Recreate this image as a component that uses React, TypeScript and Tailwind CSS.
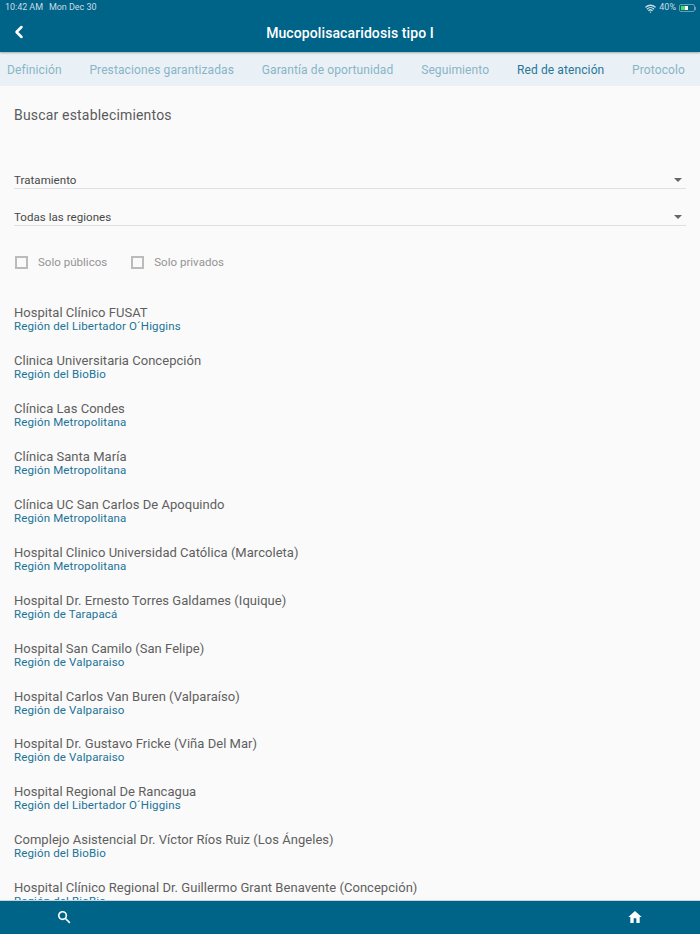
import React from 'react';
import { ChevronLeft, Wifi } from 'lucide-react';

interface Establishment {
  name: string;
  region: string;
}

const tabs = [
  { label: 'Definición', active: false },
  { label: 'Prestaciones garantizadas', active: false },
  { label: 'Garantía de oportunidad', active: false },
  { label: 'Seguimiento', active: false },
  { label: 'Red de atención', active: true },
  { label: 'Protocolo', active: false },
];

const establishments: Establishment[] = [
  { name: 'Hospital Clínico FUSAT', region: 'Región del Libertador O´Higgins' },
  { name: 'Clinica Universitaria Concepción', region: 'Región del BioBio' },
  { name: 'Clínica Las Condes', region: 'Región Metropolitana' },
  { name: 'Clínica Santa María', region: 'Región Metropolitana' },
  { name: 'Clínica UC San Carlos De Apoquindo', region: 'Región Metropolitana' },
  { name: 'Hospital Clinico Universidad Católica (Marcoleta)', region: 'Región Metropolitana' },
  { name: 'Hospital Dr. Ernesto Torres Galdames (Iquique)', region: 'Región de Tarapacá' },
  { name: 'Hospital San Camilo (San Felipe)', region: 'Región de Valparaiso' },
  { name: 'Hospital Carlos Van Buren (Valparaíso)', region: 'Región de Valparaiso' },
  { name: 'Hospital Dr. Gustavo Fricke (Viña Del Mar)', region: 'Región de Valparaiso' },
  { name: 'Hospital Regional De Rancagua', region: 'Región del Libertador O´Higgins' },
  { name: 'Complejo Asistencial Dr. Víctor Ríos Ruiz (Los Ángeles)', region: 'Región del BioBio' },
  { name: 'Hospital Clínico Regional Dr. Guillermo Grant Benavente (Concepción)', region: 'Región del BioBio' },
];

const SelectRow = ({ label, className }: { label: string; className: string }) => (
  <div className={`flex h-[20px] items-center justify-between border-b border-[#e0e0e0] pr-[4px] pt-[5px] ${className}`}>
    <span className="text-[11.5px] tracking-[0.05px] text-[#484848]">{label}</span>
    <div className="mb-[2px] h-0 w-0 border-x-[4px] border-t-[4px] border-x-transparent border-t-[#666666]" />
  </div>
);

const CheckOption = ({ label }: { label: string }) => (
  <div className="flex items-center">
    <div className="h-[13px] w-[13px] border-2 border-[#bbbbbb]" />
    <span className="ml-[10px] text-[11.5px] tracking-[0.02px] text-[#949494]">{label}</span>
  </div>
);

export default function App() {
  return (
    <div className="flex h-[934px] w-[700px] flex-col overflow-hidden bg-[#fafafa] font-['Roboto',sans-serif]">
      {/* Status bar + title */}
      <header className="z-10 h-[52px] shrink-0 bg-[#006388] text-white shadow-[0_1px_2px_rgba(0,0,0,0.3)]">
        <div className="flex h-[14px] items-center justify-between pl-[5px] pr-[4px] pt-[2px] text-[9px] text-[#c9dde5]">
          <div className="flex gap-[6px] tracking-[-0.05px]">
            <span>10:42 AM</span>
            <span>Mon Dec 30</span>
          </div>
          <div className="flex items-center gap-[3px]">
            <Wifi className="h-[11px] w-[11px]" strokeWidth={3} />
            <span>40%</span>
            <div className="flex items-center">
              <div className="relative flex h-[8px] w-[16px] items-center rounded-[2px] border border-[#6f9db0] p-[1px]">
                <div className="h-full w-[6px] bg-[#4cd964]" />
                <span className="absolute left-[5px] top-[1px] h-[4px] w-[3px] bg-white" />
              </div>
              <div className="h-[3px] w-[1px] bg-[#6f9db0]" />
            </div>
          </div>
        </div>
        <div className="relative flex h-[38px] items-center justify-center">
          <ChevronLeft className="absolute left-[9px] top-[8px] h-[20px] w-[20px]" strokeWidth={3} />
          <span className="text-[14px] font-medium tracking-[0.1px]">Mucopolisacaridosis tipo I</span>
        </div>
      </header>

      {/* Tabs */}
      <nav className="flex h-[34px] shrink-0 items-center justify-between bg-[#e9f1f6] pl-[7px] pr-[15px] pt-[1px]">
        {tabs.map((tab) => (
          <span
            key={tab.label}
            className={`text-[12px] tracking-[0.11px] ${tab.active ? 'text-[#2a7596]' : 'text-[#8ab4c8]'}`}
          >
            {tab.label}
          </span>
        ))}
      </nav>

      <main className="flex min-h-0 flex-1 flex-col overflow-hidden px-[14px]">
        <h2 className="mt-[20px] text-[14px] leading-[18px] tracking-[0.18px] text-[#5a5a5a]">Buscar establecimientos</h2>

        <SelectRow label="Tratamiento" className="mt-[45px]" />
        <SelectRow label="Todas las regiones" className="mt-[17px]" />

        <div className="mt-[28px] flex gap-[24px] pl-[1px]">
          <CheckOption label="Solo públicos" />
          <CheckOption label="Solo privados" />
        </div>

        <ul className="mt-[35px]">
          {establishments.map((item) => (
            <li key={item.name} className="mb-[19.92px] h-[28px]">
              <div className="text-[13px] leading-[14px] tracking-[0.03px] text-[#5f5f5f]">{item.name}</div>
              <div className="text-[11.5px] leading-[13px] tracking-[0.14px] text-[#1b7397]">{item.region}</div>
            </li>
          ))}
        </ul>
      </main>

      {/* Bottom bar */}
      <footer className="z-10 flex h-[34px] shrink-0 items-center justify-between border-t border-[#c8d4da] bg-[#006388] pb-[1px] pl-[57px] pr-[57px]">
        <svg viewBox="0 0 24 24" className="h-[14px] w-[14px]" fill="none" stroke="white" strokeWidth="2.8">
          <circle cx="9.5" cy="9.5" r="6.5" />
          <path d="M14.5 14.5 L22 22" />
        </svg>
        <svg viewBox="0 0 24 24" className="h-[16px] w-[16px]" fill="white">
          <path d="M10 21v-7h4v7h5v-9h3L12 3 2 12h3v9z" />
        </svg>
      </footer>
    </div>
  );
}
